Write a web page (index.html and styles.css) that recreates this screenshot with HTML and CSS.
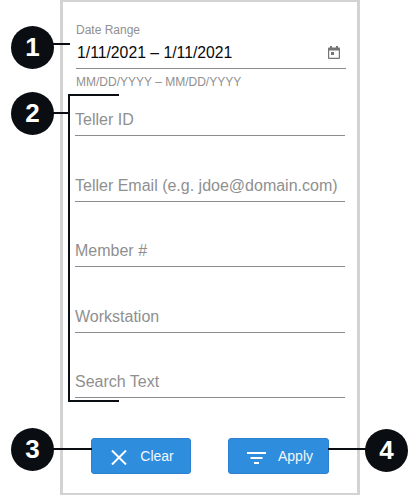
FILE: index.html
```html
<!DOCTYPE html>
<html lang="en">
<head>
    <meta charset="UTF-8">
    <meta name="viewport" content="width=device-width, initial-scale=1.0">
    <title>Search Filters</title>
    <link rel="stylesheet" href="styles.css">
</head>
<body>
    <div class="panel">
        <div class="date-field">
            <div class="date-label">Date Range</div>
            <div class="date-value">
                <span>1/11/2021 – 1/11/2021</span>
                <svg class="calendar" width="12" height="13" viewBox="0 0 12 13">
                    <path fill="#757575" d="M2 0h2v1.500h4V0h2v1.500h1c.5 0 1 .5 1 1V12c0 .5-.5 1-1 1H1c-.5 0-1-.5-1-1V2.500c0-.5.5-1 1-1h1zM1.200 4.500v7.300h9.600V4.500z"/>
                    <rect fill="#757575" x="3" y="6" width="3" height="3"/>
                </svg>
            </div>
            <div class="date-hint">MM/DD/YYYY – MM/DD/YYYY</div>
        </div>
        <div class="field first">Teller ID</div>
        <div class="field">Teller Email (e.g. jdoe@domain.com)</div>
        <div class="field short">Member #</div>
        <div class="field">Workstation</div>
        <div class="field short">Search Text</div>
        <div class="buttons">
            <button class="btn">
                <svg width="16" height="15" viewBox="0 0 16 15">
                    <path stroke="#fff" stroke-width="2" fill="none" d="M1 .5l14 14M15 .5l-14 14"/>
                </svg>
                <span>Clear</span>
            </button>
            <button class="btn">
                <svg width="19" height="12" viewBox="0 0 19 12">
                    <path fill="#fff" d="M0 0h19v2H0zM3.500 5h12v2h-12zM7 10h5v2H7z"/>
                </svg>
                <span>Apply</span>
            </button>
        </div>
    </div>

    <!-- callouts -->
    <div class="bracket"></div>
    <div class="leader leader-1"></div>
    <div class="leader leader-2"></div>
    <div class="leader leader-3"></div>
    <div class="leader leader-4"></div>
    <div class="badge badge-1">1</div>
    <div class="badge badge-2">2</div>
    <div class="badge badge-3">3</div>
    <div class="badge badge-4">4</div>
</body>
</html>
```

FILE: styles.css
```css
body {
    font-family: "Liberation Sans", Arial, sans-serif;
    margin: 0;
    padding: 0 0 0 60px;
    background-color: #fff;
    height: 495px;
    overflow: hidden;
    position: relative;
}
.panel {
    box-sizing: border-box;
    width: 300px;
    height: 495px;
    border: 3px solid #d3d3d3;
    border-top-width: 2px;
    border-bottom-width: 2px;
    padding: 21px 12px 0 12px;
    display: flex;
    flex-direction: column;
}
.date-field {
    margin: 0 -1px 0 1px;
}
.date-label {
    font-size: 12px;
    line-height: 14px;
    color: #8f8f8f;
}
.date-value {
    display: flex;
    justify-content: space-between;
    align-items: center;
    height: 31px;
    font-size: 15.75px;
    color: #0a0a0a;
    border-bottom: 1px solid #8c8c8c;
    padding: 0 6px 0 1px;
}
.date-hint {
    font-size: 12px;
    line-height: 14px;
    margin-top: 6px;
    color: #8f8f8f;
}
.field {
    height: 65.500px;
    box-sizing: border-box;
    border-bottom: 1px solid #8c8c8c;
    font-size: 16px;
    line-height: 19px;
    color: #8f8f8f;
    display: flex;
    align-items: flex-end;
    padding-bottom: 6px;
}
.field.first {
    height: 47px;
}
.buttons {
    display: flex;
    justify-content: space-between;
    margin: 40px 16px 0 16px;
}
.btn {
    width: 100px;
    height: 36px;
    border: 1px solid #2c80cf;
    border-radius: 3px;
    background-color: #2f8ddd;
    color: #f2f7fc;
    font-family: inherit;
    font-size: 14px;
    display: flex;
    align-items: center;
    justify-content: center;
    gap: 13px;
    padding: 0 0 0 3px;
}
.btn svg {
    margin-top: 3px;
}
.btn + .btn {
    width: 101px;
    gap: 12px;
}
.bracket {
    position: absolute;
    left: 68px;
    top: 94px;
    width: 49px;
    height: 304px;
    border: 2px solid #0a0d11;
    border-right: none;
}
.leader {
    position: absolute;
    height: 2px;
    background-color: #0a0d11;
}
.leader-1 { left: 52px; top: 43px; width: 18px; }
.leader-2 { left: 52px; top: 112px; width: 17px; }
.leader-3 { left: 52px; top: 448px; width: 40px; }
.leader-4 { left: 328px; top: 448px; width: 40px; }
.badge {
    position: absolute;
    box-sizing: border-box;
    width: 43px;
    height: 43px;
    border-radius: 50%;
    background-color: #0a0d11;
    color: #fff;
    font-size: 26px;
    font-weight: bold;
    line-height: 43px;
    text-align: center;
}
.badge-1 { left: 11px; top: 26px; }
.badge-2 { left: 11px; top: 92px; }
.badge-3 { left: 11px; top: 428px; }
.badge-4 { left: 365px; top: 429px; }
```
